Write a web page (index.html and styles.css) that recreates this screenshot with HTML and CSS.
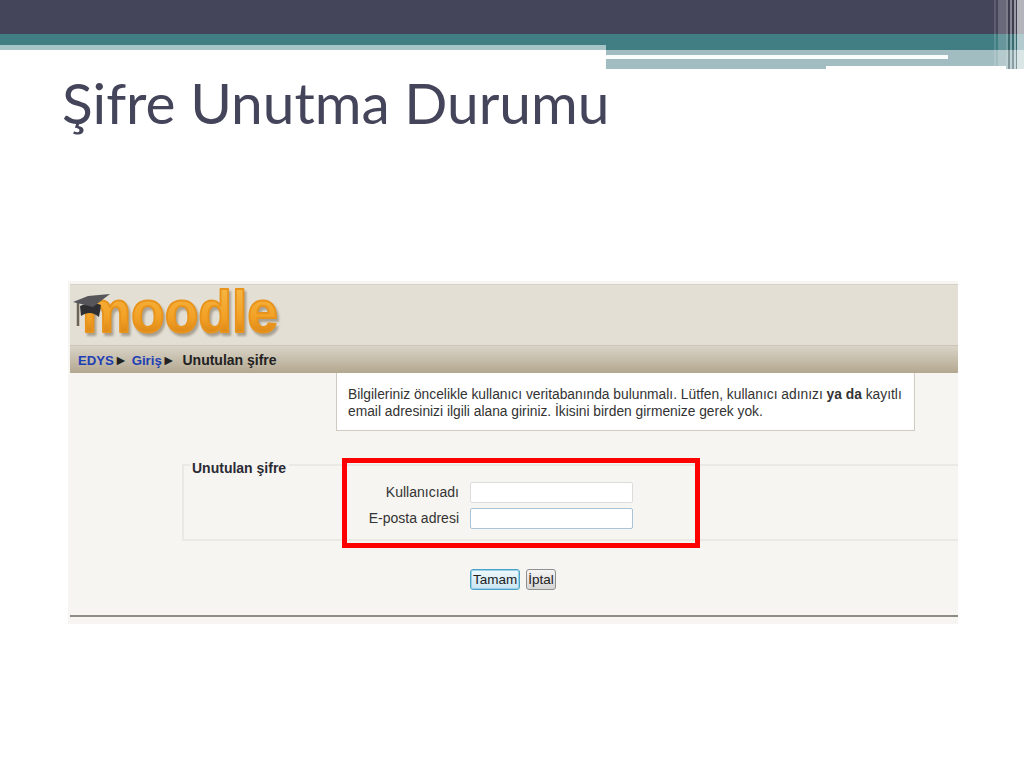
FILE: index.html
```html
<!DOCTYPE html>
<html lang="tr">
<head>
<meta charset="utf-8">
<title>Şifre Unutma Durumu</title>
<link rel="stylesheet" href="styles.css">
</head>
<body>
<svg class="top-art" width="1024" height="70" viewBox="0 0 1024 70" aria-hidden="true">
  <rect x="0" y="0" width="1024" height="34" fill="#44445a"/>
  <rect x="0" y="34" width="1024" height="16" fill="#417e84"/>
  <rect x="0" y="45" width="606" height="5" fill="#a8c4c8"/>
  <rect x="606" y="50" width="418" height="19" fill="#a2bdc1"/>
  <rect x="606" y="55" width="342" height="4" fill="#fbfdfd"/>
  <rect x="826" y="66" width="180" height="4" fill="#ffffff"/>
  <rect x="994" y="0" width="2" height="69" fill="#fff" opacity=".14"/>
  <rect x="998" y="0" width="8" height="69" fill="#fff" opacity=".2"/>
  <rect x="1006" y="0" width="2" height="69" fill="#fff" opacity=".3"/>
  <rect x="1008" y="0" width="2" height="69" fill="#222" opacity=".25"/>
  <rect x="1010" y="0" width="2" height="69" fill="#fff" opacity=".35"/>
  <rect x="1012" y="0" width="2" height="69" fill="#222" opacity=".2"/>
  <rect x="1014" y="0" width="2" height="69" fill="#fff" opacity=".45"/>
  <rect x="1016" y="0" width="1" height="69" fill="#222" opacity=".25"/>
  <rect x="1017" y="0" width="7" height="69" fill="#fff" opacity=".6"/>
</svg>
<h1 class="title">Şifre Unutma Durumu</h1>
<main class="shot">
  <header class="logo-bar">
    <svg class="logo" width="270" height="60" viewBox="0 0 270 60" aria-label="moodle logo">
      <defs>
        <linearGradient id="og" x1="0" y1="0" x2="0" y2="1">
          <stop offset="0" stop-color="#f8bd4c"/>
          <stop offset=".6" stop-color="#f2a025"/>
          <stop offset="1" stop-color="#c9740e"/>
        </linearGradient>
      </defs>
      <text class="logo-text" x="12" y="47" textLength="196" lengthAdjust="spacingAndGlyphs" fill="url(#og)">moodle</text>
      <path d="M8 17 V41" stroke="#6b6356" stroke-width="2.5" fill="none"/>
      <path d="M10 21 C18 18 25 18 31 20 L29 32 C23 27 17 27 11 31 Z" fill="#2f2e31"/>
      <path d="M3 17 L18 11 L40 9 L23 22 Z" fill="#56565a"/>
    </svg>
  </header>
  <nav class="crumbs">
    <a class="crumb-link">EDYS</a><span class="arrow">►</span>
    <a class="crumb-link">Giriş</a><span class="arrow">►</span>
    <span class="crumb-here">Unutulan şifre</span>
  </nav>
  <section class="content">
    <p class="notice">Bilgileriniz öncelikle kullanıcı veritabanında bulunmalı. Lütfen, kullanıcı adınızı <b>ya da</b> kayıtlı email adresinizi ilgili alana giriniz. İkisini birden girmenize gerek yok.</p>
    <fieldset class="group">
      <legend class="group-title">Unutulan şifre</legend>
      <div class="row"><label class="row-label">Kullanıcıadı</label><input class="field" type="text"></div>
      <div class="row"><label class="row-label">E-posta adresi</label><input class="field field-active" type="text"></div>
      <div class="highlight"></div>
    </fieldset>
    <div class="actions">
      <button class="btn btn-default" type="button">Tamam</button>
      <button class="btn" type="button">İptal</button>
    </div>
  </section>
  <div class="rule"></div>
</main>
</body>
</html>
```
FILE: styles.css
```css
* { box-sizing: border-box; }
html, body { margin: 0; padding: 0; }
body { width: 1024px; height: 768px; overflow: hidden; background: #fff; font-family: "Liberation Sans", Arial, sans-serif; }
.top-art { display: block; }
.title { margin: 0; padding-left: 62px; height: 211px; font: 400 56.8px/64px Lato, sans-serif; color: #44445a; }
.shot { margin-left: 68px; width: 890px; height: 343px; background: #f7f5f1; padding-top: 3px; }
.logo-bar { margin-left: 2px; height: 61px; background: #e3dfd5; border-top: 1px solid #d5d1c6; }
.logo { display: block; }
.logo-text { font: 700 60px "Liberation Sans", sans-serif; stroke: #e8941c; stroke-width: 2; stroke-linejoin: round; filter: drop-shadow(2px 3px 1px rgba(120, 110, 90, .55)); }
.crumbs { margin-left: 2px; height: 28px; padding: 6px 0 0 8px; font-size: 14px; line-height: 16px; font-weight: 700; background: linear-gradient(#d9d4c8, #b3a78f); border-top: 1px solid #c9c4b6; white-space: nowrap; }
.crumb-link { color: #1e3fb4; font-size: 13.2px; }
.arrow { color: #222; font-size: 14px; }
.crumb-here { color: #222; margin-left: 3px; }
.content { padding-left: 114px; height: 242px; }
.notice { margin: 0 0 0 154px; width: 579px; height: 58px; padding: 13px 10px 0 11px; background: #fff; border: 1px solid #cfcbc0; border-top: 0; font-size: 13.8px; line-height: 17px; color: #333; }
.group { position: relative; margin: 23px 0 0; padding: 3px 0 0 0; width: 776px; height: 87px; border: 2px solid #ebe9e4; border-right: 0; }
.group-title { margin-left: 6px; padding: 6px 3px 0 2px; font-size: 14px; line-height: 16px; font-weight: 700; color: #2a2a35; }
.row { display: flex; align-items: center; height: 26px; }
.row-label { width: 286px; padding-right: 11px; text-align: right; font-size: 14px; color: #333; }
.field { width: 163px; height: 21px; padding: 0; background: #fff; border: 1px solid #dcdcdc; border-radius: 2px; }
.field-active { border-color: #a9c3d8; }
.highlight { position: absolute; left: 158px; top: -18px; width: 358px; height: 90px; border: 5px solid #fe0000; }
.actions { display: flex; gap: 6px; margin: 28px 0 0 288px; }
.btn { height: 21px; padding: 0 1px; font: 13.5px/17px "Liberation Sans", Arial, sans-serif; color: #222; background: linear-gradient(#f4f4f4, #d6d6d6); border: 1px solid #8f8f8f; border-radius: 3px; }
.btn-default { padding: 0 2px; border-color: #4ca3c9; background: linear-gradient(#eef8fc, #c9e6f2); box-shadow: 0 0 0 1px #9bd0e6 inset; }
.rule { margin-left: 2px; height: 2px; background: #8f8c84; }
```
